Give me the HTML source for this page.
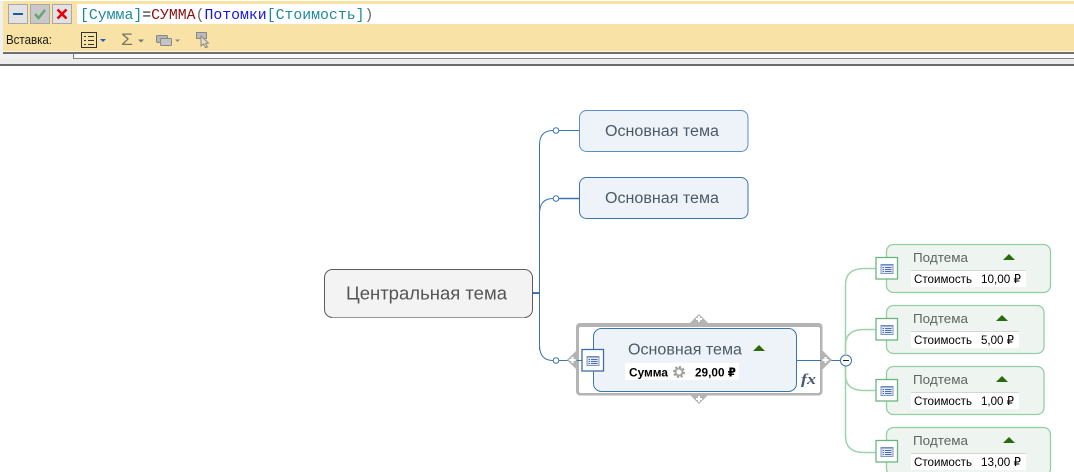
<!DOCTYPE html>
<html><head><meta charset="utf-8"><style>
html,body{margin:0;padding:0;background:#fff;width:1074px;height:472px;overflow:hidden}
svg{display:block}
text{font-family:"Liberation Sans","DejaVu Sans",sans-serif}
</style></head><body>
<svg width="1074" height="472" viewBox="0 0 1074 472" xmlns="http://www.w3.org/2000/svg">
<defs>
<g id="ic">
<rect x="0.5" y="0.5" width="21.500" height="21.500" fill="#fff" stroke="currentColor" stroke-width="1.300"/>
<rect x="5.500" y="7.500" width="12" height="9" fill="#e3eaf6" stroke="#7f98c4"/>
<path d="M6 8H17" stroke="#5f7fb5"/>
<path d="M7 10.500H8.500M9.500 10.500H16M7 12.500H8.500M9.500 12.500H16M7 14.500H8.500M9.500 14.500H16" stroke="#4f6fa8" stroke-width="1"/>
</g>
<path id="tri" d="M0 6L6 0L12 6Z" fill="#2b6a0b"/>
<path id="pl" d="M-3 0H3M0 -3V3" stroke="#fff" stroke-width="2"/>
</defs>
<!-- toolbar -->
<rect x="0" y="0" width="1074" height="66" fill="#f0f0f0"/>
<rect x="0" y="0" width="1074" height="1" fill="#fff"/>
<rect x="3" y="1" width="1071" height="51" fill="#f8e2a5"/>
<rect x="77" y="4" width="997" height="20" fill="#fff"/>
<rect x="3" y="51" width="1071" height="1" fill="#fdf6e0"/>
<rect x="3" y="52" width="1071" height="2" fill="#6e6e73"/>
<rect x="73" y="54" width="1001" height="4" fill="#fafafa"/>
<rect x="73" y="52" width="1" height="7" fill="#77777c"/>
<rect x="73" y="58" width="1001" height="1" fill="#85858a"/>
<rect x="0" y="59" width="1074" height="5" fill="#ececec"/>
<rect x="0" y="64" width="1074" height="2" fill="#6a6a6a"/>
<!-- buttons -->
<rect x="8.500" y="4.500" width="19" height="19" fill="#e2e2e2" stroke="#a8a8a8"/>
<rect x="13" y="13" width="10" height="2" fill="#1f5c9e"/>
<rect x="30.500" y="4.500" width="19" height="19" fill="#c8c8c8" stroke="#a8a8a8"/>
<path d="M35 14L38.500 18L45 10" fill="none" stroke="#69a373" stroke-width="2.500"/>
<rect x="52.500" y="4.500" width="19" height="19" fill="#e2e2e2" stroke="#a8a8a8"/>
<path d="M57.500 9.500L66.500 18.500M66.500 9.500L57.500 18.500" stroke="#e8000c" stroke-width="2.600"/>
<!-- formula -->
<text x="80" y="19" xml:space="preserve" style="font-family:'Liberation Mono',monospace;font-size:14.82px"><tspan fill="#1d8a9a">[Сумма]</tspan><tspan fill="#222">=</tspan><tspan fill="#8b1010">СУММА</tspan><tspan fill="#666">(</tspan><tspan fill="#1414e0">Потомки</tspan><tspan fill="#1d8a9a">[Стоимость]</tspan><tspan fill="#666">)</tspan></text>
<text x="6" y="44" font-size="12.500" fill="#1a1a1a" textLength="46" lengthAdjust="spacingAndGlyphs">Вставка:</text>
<!-- toolbar icons -->
<rect x="81.500" y="32.500" width="15" height="15" fill="none" stroke="#333" stroke-width="1"/>
<path d="M84 36.500H86M88 36.500H94M84 40.500H86M88 40.500H94M84 44.500H86M88 44.500H94" stroke="#333"/>
<path d="M100 39H106L103 42Z" fill="#1f62b5"/>
<text x="121" y="45" font-size="17" fill="#7a7566" textLength="12" lengthAdjust="spacingAndGlyphs">Σ</text>
<path d="M138 39.500H144L141 42.500Z" fill="#777"/>
<rect x="156.500" y="35.500" width="11" height="7" rx="1" fill="#b5b5b5" stroke="#888"/>
<rect x="160.500" y="38.500" width="11" height="7" rx="1" fill="#c4c4c4" stroke="#888"/>
<path d="M175 39.500H180L177.500 42Z" fill="#888"/>
<rect x="196.500" y="32.500" width="10" height="6" fill="#bbb" stroke="#888"/>
<path d="M201 36L208.500 43L205.500 43.500L207.500 47L205.500 47.500L203.500 44L201 46Z" fill="#e4dcc4" stroke="#888"/>

<!-- main connectors -->
<g fill="none" stroke="#3a75ae">
<path d="M533 293H540" stroke-width="2"/>
<path d="M539.500 350V145Q539.500 130.500 553 130.500H580"/>
<path d="M539.500 214Q539.500 198.500 553 198.500H580"/>
<path d="M559 198.500H580" stroke-width="1.600"/>
<path d="M539.500 345Q539.500 360.500 553 360.500H570"/>
</g>
<circle cx="556" cy="130.500" r="2.800" fill="#fff" stroke="#3a75ae"/>
<circle cx="556" cy="198.500" r="2.800" fill="#fff" stroke="#3a75ae"/>
<circle cx="556" cy="360.500" r="2.800" fill="#fff" stroke="#3a75ae"/>

<!-- central -->
<rect x="324.500" y="269.500" width="208" height="48" rx="8" fill="#f3f3f3" stroke="#5c5c5c"/>
<path d="M332 317.500H525" stroke="#999" stroke-width="1"/>
<text x="346" y="299.500" font-size="18" fill="#555" textLength="161" lengthAdjust="spacingAndGlyphs">Центральная тема</text>

<!-- main topics -->
<rect x="579.500" y="110.500" width="168.500" height="41" rx="7" fill="#eef3fa" stroke="#5a8fc4"/>
<text x="605" y="136" font-size="15.500" fill="#4c5a66" textLength="114" lengthAdjust="spacingAndGlyphs">Основная тема</text>
<rect x="579.500" y="177.500" width="168.500" height="41" rx="7" fill="#eef3fa" stroke="#3a75ae"/>
<text x="605" y="203" font-size="15.500" fill="#4c5a66" textLength="114" lengthAdjust="spacingAndGlyphs">Основная тема</text>

<!-- selected frame -->
<path d="M690 323L699 314L708 323Z" fill="#b4b4b4"/>
<path d="M690 395L699 404L708 395Z" fill="#b4b4b4"/>
<path d="M577 350L567 360L577 370Z" fill="#b4b4b4"/>
<path d="M822 350L832 360L822 370Z" fill="#b4b4b4"/>
<rect x="576" y="323" width="246.500" height="72.500" rx="4" fill="#b4b4b4"/>
<rect x="579" y="327" width="241" height="66" rx="2" fill="#fff"/>
<path d="M560 360.500H582" stroke="#3a75ae"/>
<path d="M567 360L572 355L577 360L572 365Z" fill="#b4b4b4"/>
<rect x="593.500" y="328.500" width="203" height="63" rx="8" fill="#eef3fa" stroke="#3a75ae"/>
<path d="M797 360.500H821M831 360.500H840" stroke="#3a75ae"/>
<use href="#pl" x="699" y="319"/>
<use href="#pl" x="699" y="399"/>
<use href="#pl" x="572.500" y="360"/>
<path d="M821 354H824L832 360L824 367H821Z" fill="#b4b4b4"/>
<use href="#pl" x="825.500" y="360"/>
<g transform="translate(581.500,349)" style="color:#3a6ea5"><use href="#ic"/></g>
<text x="628" y="354.500" font-size="15.500" fill="#4c5a66" textLength="114" lengthAdjust="spacingAndGlyphs">Основная тема</text>
<use href="#tri" x="753" y="345"/>
<rect x="625" y="363" width="114" height="17" fill="#fff"/>
<text x="629" y="376.500" font-size="12" font-weight="bold" fill="#000" textLength="39" lengthAdjust="spacingAndGlyphs">Сумма</text>
<circle cx="679" cy="372" r="4.500" fill="none" stroke="#9a9a9a" stroke-width="3" stroke-dasharray="2 1.500"/>
<circle cx="679" cy="372" r="3.500" fill="none" stroke="#a5a5a5" stroke-width="2"/>
<text x="695" y="376.500" font-size="12" font-weight="bold" fill="#000" textLength="41" lengthAdjust="spacingAndGlyphs">29,00 ₽</text>
<text x="801" y="384" style="font-family:'Liberation Serif',serif;font-style:italic;font-weight:bold" font-size="14.500" fill="#4a5678" textLength="15" lengthAdjust="spacingAndGlyphs">fx</text>

<!-- sub connectors -->
<g fill="none" stroke="#9fd3ac" stroke-width="1.500">
<path d="M845.500 354V285Q845.500 268.500 864 268.500H876"/>
<path d="M845.500 354V345Q845.500 329.500 864 329.500H876"/>
<path d="M845.500 366V375Q845.500 390.500 864 390.500H876"/>
<path d="M845.500 366V436Q845.500 452.500 864 452.500H876"/>
</g>
<circle cx="846" cy="360.500" r="5.500" fill="#fff" stroke="#3a75ae"/>
<path d="M843 360.500H849" stroke="#222"/>

<!-- subtopics -->
<g fill="#eef5f0" stroke="#93cfa3" stroke-width="1.300">
<rect x="886.500" y="244.500" width="164" height="48" rx="7"/>
<rect x="886.500" y="305.500" width="157.500" height="48" rx="7"/>
<rect x="886.500" y="366.500" width="157.500" height="48" rx="7"/>
<rect x="886.500" y="427.500" width="164" height="48" rx="7"/>
</g>

<g style="color:#6cb583">
<use href="#ic" x="875.500" y="257"/>
<use href="#ic" x="875.500" y="318"/>
<use href="#ic" x="875.500" y="379"/>
<use href="#ic" x="875.500" y="440"/>
</g>

<g font-size="12.500" fill="#5d6662">
<text x="913" y="262" textLength="55" lengthAdjust="spacingAndGlyphs">Подтема</text>
<text x="913" y="323" textLength="55" lengthAdjust="spacingAndGlyphs">Подтема</text>
<text x="913" y="384" textLength="55" lengthAdjust="spacingAndGlyphs">Подтема</text>
<text x="913" y="445" textLength="55" lengthAdjust="spacingAndGlyphs">Подтема</text>
</g>
<use href="#tri" x="1003" y="254"/>
<use href="#tri" x="996" y="315"/>
<use href="#tri" x="996" y="376"/>
<use href="#tri" x="1003" y="437"/>

<rect x="911" y="270" width="115" height="17" fill="#fff"/><path d="M911 270.500H1026" stroke="#d5d5d5"/>
<rect x="911" y="331" width="108" height="17" fill="#fff"/><path d="M911 331.500H1019" stroke="#d5d5d5"/>
<rect x="911" y="392" width="108" height="17" fill="#fff"/><path d="M911 392.500H1019" stroke="#d5d5d5"/>
<rect x="911" y="453" width="115" height="17" fill="#fff"/><path d="M911 453.500H1026" stroke="#d5d5d5"/>

<g font-size="12" fill="#000">
<text x="914" y="283" textLength="58" lengthAdjust="spacingAndGlyphs">Стоимость</text>
<text x="981" y="283" textLength="40" lengthAdjust="spacingAndGlyphs">10,00 ₽</text>
<text x="914" y="344" textLength="58" lengthAdjust="spacingAndGlyphs">Стоимость</text>
<text x="981" y="344" textLength="33" lengthAdjust="spacingAndGlyphs">5,00 ₽</text>
<text x="914" y="405" textLength="58" lengthAdjust="spacingAndGlyphs">Стоимость</text>
<text x="981" y="405" textLength="33" lengthAdjust="spacingAndGlyphs">1,00 ₽</text>
<text x="914" y="466" textLength="58" lengthAdjust="spacingAndGlyphs">Стоимость</text>
<text x="981" y="466" textLength="40" lengthAdjust="spacingAndGlyphs">13,00 ₽</text>
</g>
</svg>
</body></html>
